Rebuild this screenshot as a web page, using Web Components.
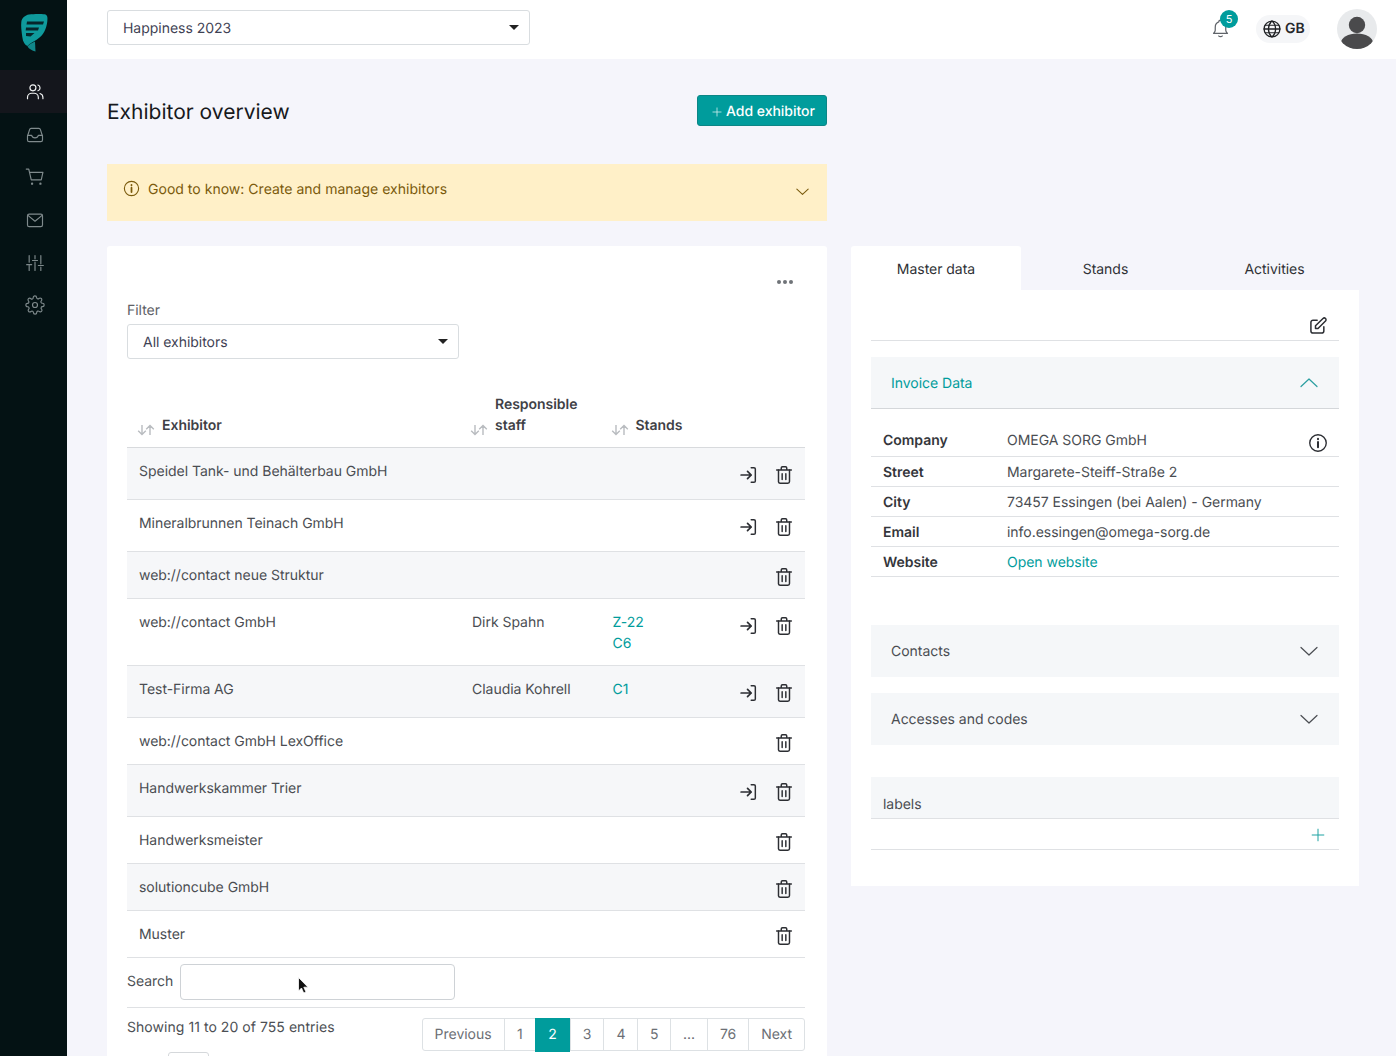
<!DOCTYPE html>
<html lang="en"><head><meta charset="utf-8"><title>Exhibitor overview</title>
<style>
html,body{margin:0;padding:0;height:1056px;overflow:hidden;background:#f5f5fb}
body{font:14px/21px Inter,"Liberation Sans",sans-serif;color:#3f4254;text-rendering:geometricPrecision;letter-spacing:-.03px}
</style></head><body>
<app-shell>
  <side-bar slot="side"></side-bar>
  <top-bar slot="top"></top-bar>
  <page-head>Exhibitor overview</page-head>
  <hint-box>Good to know: Create and manage exhibitors</hint-box>
  <div class="cols" style="display:flex;gap:24px;align-items:flex-start;margin-top:25px">
    <exhibitor-card>
      <ex-row h="52" login><span slot="name">Speidel Tank- und Behälterbau GmbH</span></ex-row>
      <ex-row h="52" login alt="0"><span slot="name">Mineralbrunnen Teinach GmbH</span></ex-row>
      <ex-row h="47"><span slot="name">web://contact neue Struktur</span></ex-row>
      <ex-row h="67" login alt="0"><span slot="name">web://contact GmbH</span><span slot="staff">Dirk Spahn</span><span slot="stands">Z-22<br>C6</span></ex-row>
      <ex-row h="52" login><span slot="name">Test-Firma AG</span><span slot="staff">Claudia Kohrell</span><span slot="stands">C1</span></ex-row>
      <ex-row h="47" alt="0"><span slot="name">web://contact GmbH LexOffice</span></ex-row>
      <ex-row h="52" login><span slot="name">Handwerkskammer Trier</span></ex-row>
      <ex-row h="47" alt="0"><span slot="name">Handwerksmeister</span></ex-row>
      <ex-row h="47"><span slot="name">solutioncube GmbH</span></ex-row>
      <ex-row h="47" alt="0"><span slot="name">Muster</span></ex-row>
    </exhibitor-card>
    <detail-panel></detail-panel>
  </div>
</app-shell>
<script>
const ICONS={
users:'<circle cx="9.5" cy="7" r="3.6"/><path d="M3 20v-1.5C3 15.5 5.5 13.5 8 13.5h3c2.5 0 5 2 5 5V20"/><path d="M15.5 3.6a3.6 3.6 0 0 1 0 6.9M18 13.8c2 .6 3.5 2.4 3.5 4.7V20"/>',
inbox:'<path d="M3 13.5l2.5-8A2 2 0 0 1 7.4 4h9.2a2 2 0 0 1 1.9 1.5l2.500 8V18a2 2 0 0 1-2 2H5a2 2 0 0 1-2-2z"/><path d="M3 12.500h5c.5 2 2 3 4 3s3.500-1 4-3h5"/>',
cart:'<path d="M1.500 2.500h3l3 13h12l2-9H5.500"/><circle cx="8.500" cy="20" r=".7"/><circle cx="18.500" cy="20" r=".7"/>',
mail:'<rect x="3" y="5" width="18" height="15" rx="2"/><path d="M3.500 6.500L12 13.500l8.500-7"/>',
sliders:'<path d="M5 3v8M5 15v6M12 3v4M12 11v10M19 3v10M19 17v4M2 14h6M9 9h6M16 15h6"/>',
gear:'<circle cx="12" cy="12" r="3"/><path d="M19.400 15a1.650 1.650 0 0 0 .33 1.820l.06.06a2 2 0 1 1-2.830 2.830l-.06-.06a1.650 1.650 0 0 0-2.800 1.170V21a2 2 0 1 1-4 0v-.09a1.650 1.650 0 0 0-2.800-1.170l-.06.06a2 2 0 1 1-2.830-2.830l.06-.06a1.650 1.650 0 0 0-1.170-2.800H3a2 2 0 1 1 0-4h.09a1.650 1.650 0 0 0 1.170-2.800l-.06-.06a2 2 0 1 1 2.830-2.830l.06.06a1.650 1.650 0 0 0 2.800-1.170V3a2 2 0 1 1 4 0v.09a1.650 1.650 0 0 0 2.800 1.170l.06-.06a2 2 0 1 1 2.830 2.830l-.06.06a1.650 1.650 0 0 0 1.170 2.800H21a2 2 0 1 1 0 4h-.09a1.650 1.650 0 0 0-1.510 1.110z"/>',
bell:'<path d="M10 4.500a2 2 0 0 1 4 0c2.600 1 4 3.200 4 6v3.500c0 1.500 1 2.500 2 3.500H4c1-1 2-2 2-3.500v-3.500c0-2.800 1.400-5 4-6z"/><path d="M10 20.500c.5 1 3.500 1 4 0"/>',
globe:'<circle cx="12" cy="12" r="9.500"/><path d="M2.500 12h19M12 2.500c3 2.600 4.300 5.800 4.300 9.500s-1.300 6.900-4.300 9.500c-3-2.600-4.300-5.800-4.300-9.500S9 5.100 12 2.500z"/><path d="M3.600 7.500h16.800M3.600 16.500h16.800" stroke-width="1.200"/>',
login:'<path d="M15.500 4h3a1.500 1.500 0 0 1 1.500 1.500v13a1.500 1.500 0 0 1-1.500 1.500h-3"/><path d="M4.500 12h11M11.500 8l4 4-4 4" stroke-width="1.900"/>',
trash:'<path d="M4 6.500h16M9 6.500V4.300A1.300 1.300 0 0 1 10.300 3h3.400A1.300 1.300 0 0 1 15 4.300v2.200"/><path d="M6 6.500v13A1.800 1.800 0 0 0 7.800 21h8.400a1.800 1.800 0 0 0 1.800-1.800V6.500"/><path d="M10 10.500v6.500M14 10.500v6.500"/>',
edit:'<path d="M11 5H6a2.500 2.500 0 0 0-2.500 2.500V18A2.500 2.500 0 0 0 6 20.500h10.500A2.500 2.500 0 0 0 19 18v-5"/><path d="M9 15v-3.200L18 3a1.900 1.900 0 0 1 3 3l-9 9z"/>',
info:'<circle cx="12" cy="12" r="9"/><path d="M12 11v5.500" stroke-width="2.200"/><path d="M12 7.300v.6" stroke-width="2.200"/>',
down:'<path d="M4 8.500l8 7.500 8-7.500"/>',
up:'<path d="M4 15.500l8-7.500 8 7.500"/>',
plus:'<path d="M12 5v14M5 12h14"/>'
};
class XIcon extends HTMLElement{
  connectedCallback(){
    const s=this.getAttribute('size')||24,w=this.getAttribute('w')||1.6,c=this.getAttribute('color')||'currentColor';
    this.attachShadow({mode:'open'}).innerHTML=`<style>:host{display:inline-flex;width:${s}px;height:${s}px;flex:none}svg{display:block}</style>
    <svg width="${s}" height="${s}" viewBox="0 0 24 24" fill="none" stroke="${c}" stroke-width="${w}" stroke-linecap="round" stroke-linejoin="round">${ICONS[this.getAttribute('name')]}</svg>`;
  }
}
customElements.define('x-icon',XIcon);

class AppShell extends HTMLElement{constructor(){super();this.attachShadow({mode:'open'}).innerHTML=`<style>
:host{display:grid;grid-template-columns:67px 1fr;grid-template-rows:59px 1fr;height:1056px;overflow:hidden}
.s{grid-row:1/3}.m{padding:36px 37px 0 40px;min-width:0}
</style><div class="s"><slot name="side"></slot></div><div class="t"><slot name="top"></slot></div><div class="m"><slot></slot></div>`}}
customElements.define('app-shell',AppShell);

class SideBar extends HTMLElement{constructor(){super();
const item=(n,a)=>`<div class="i ${a?'a':''}"><x-icon name="${n}" size="20" w="1.400" color="${a?'#f2f4f4':'#7f8a8c'}"></x-icon></div>`;
this.attachShadow({mode:'open'}).innerHTML=`<style>
:host{display:block;height:1056px;background:#041214}
.logo{height:70px;display:flex;justify-content:center;align-items:flex-start;padding-top:13px;box-sizing:border-box}
.i{height:42.600px;box-sizing:border-box;padding:2px 0 0 2px;display:flex;align-items:center;justify-content:center}
.a{background:#14161c}
</style><div class="logo"><svg width="28" height="39" viewBox="20 12 28 39">
<path d="M29 13.500C34 12.800 41 12.800 44.500 13.300C47.500 13.800 47.800 16.500 47.300 20.500C46.500 27.500 43.500 34.500 37 38.500C33 41 29.500 42.500 27.500 45C25 44 22.800 41 22.300 36C21.500 30 20.800 25 21.300 21C21.800 17 25 14.200 29 13.500Z" fill="#0f9a9c"/>
<path d="M27.500 45.500C29 43.500 31.500 42 35 40.500L35.500 50.500C32 49.500 29 48 27.500 45.500Z" fill="#11878a"/>
<path d="M27 20.500h17l-1 3H26.500zM26 26.500h13l-1 3H25.700zM26 32h8.500l-4 3.500-4.500-.5z" fill="#06262b"/>
</svg></div>
${item('users',1)}${item('inbox')}${item('cart')}${item('mail')}${item('sliders')}${item('gear')}`}}
customElements.define('side-bar',SideBar);

class XSelect extends HTMLElement{constructor(){super();this.attachShadow({mode:'open'}).innerHTML=`<style>
:host{display:block;height:35px;box-sizing:border-box;border:1px solid #d9dde0;border-radius:3px;background:#fff;padding:7px 15px 5px;color:#3f4254;position:relative}
.c{position:absolute;right:10px;top:14px;width:0;height:0;border:5px solid transparent;border-top-color:#222;border-bottom:0}
</style><slot></slot><span class="c"></span>`}}
customElements.define('x-select',XSelect);

class TopBar extends HTMLElement{constructor(){super();this.attachShadow({mode:'open'}).innerHTML=`<style>
:host{display:flex;align-items:center;height:59px;background:#fff;padding:0 19px 0 40px}
x-select{width:423px;margin-top:-5px}
.r{margin-left:auto;display:flex;align-items:center;margin-top:-2px}
.bell{position:relative;display:flex;margin-right:25px;margin-top:-1px;color:#5f6369}
.b{position:absolute;left:10px;top:-8px;width:18px;height:18px;border-radius:50%;background:#009c9c;color:#fff;font-size:11px;line-height:18px;text-align:center}
.g{display:flex;align-items:center;gap:3px;height:28px;width:54px;box-sizing:border-box;padding:0 6px;border-radius:14px;background:#f5f6f8;font-weight:600;font-size:14px;color:#26282c;margin-right:27px}
</style><x-select>Happiness 2023</x-select><div class="r">
<div class="bell"><x-icon name="bell" size="21" w="1.400"></x-icon><span class="b">5</span></div>
<div class="g"><x-icon name="globe" size="20" w="1.600" color="#1f2124"></x-icon>GB</div>
<svg width="40" height="40" viewBox="0 0 40 40"><defs><clipPath id="ac"><circle cx="20" cy="20" r="20"/></clipPath></defs><circle cx="20" cy="20" r="20" fill="#e8eaec"/><g clip-path="url(#ac)"><circle cx="20" cy="16" r="8.200" fill="#4a4a4c"/><ellipse cx="20" cy="34" rx="16" ry="9.500" fill="#4a4a4c"/></g></svg>
</div>`}}
customElements.define('top-bar',TopBar);

class PageHead extends HTMLElement{constructor(){super();this.attachShadow({mode:'open'}).innerHTML=`<style>
:host{display:flex;width:720px;height:69px;align-items:flex-start;justify-content:space-between}
h1{margin:1px 0 0;font-size:21px;line-height:33px;font-weight:400;color:#17191d;letter-spacing:0}
button{all:unset;box-sizing:border-box;display:flex;align-items:center;gap:2px;height:31px;width:130px;padding:2px 12px 0;background:#009c9c;border:1px solid #0c8686;border-radius:3px;color:#fff;font:500 14px/21px Inter,sans-serif;white-space:nowrap;letter-spacing:-.03px}
</style><h1><slot></slot></h1><button><x-icon name="plus" size="14" w="1.300" color="#d7f2f2" style="margin-top:1px"></x-icon>Add exhibitor</button>`}}
customElements.define('page-head',PageHead);

class HintBox extends HTMLElement{constructor(){super();this.attachShadow({mode:'open'}).innerHTML=`<style>
:host{display:flex;box-sizing:border-box;width:720px;height:57px;background:#fff0c8;color:#7a5a0c;padding:14px 16px 0;letter-spacing:.02px}
.t{margin:1px 0 0 7px;flex:1}
.d{margin:5px 0 0}
x-icon.i{margin:1px 0 0 -1px}
</style><x-icon class="i" name="info" size="19" w="1.400"></x-icon><div class="t"><slot></slot></div><x-icon class="d" name="down" size="17" w="1.500"></x-icon>`}}
customElements.define('hint-box',HintBox);

const SORT=`<svg width="18" height="12" viewBox="0 0 18 12" fill="none" stroke="#b9bcc0" stroke-width="1.400"><path d="M5 1v9.500M1.200 6.800L5 10.500l3.800-3.700M13 11V1.500M9.200 5.200L13 1.500l3.800 3.700"/></svg>`;
class ExhibitorCard extends HTMLElement{constructor(){super();
const pages=[['Previous',12],['1',12.5],['2',0],['3',12],['4',12],['5',11.5],['...',12],['76',12],['Next',12]];
this.attachShadow({mode:'open'}).innerHTML=`<style>
:host{display:block;box-sizing:border-box;flex:none;width:720px;height:860px;background:#fff;border-radius:3px;padding:0 22px 0 20px;position:relative}
.dots{display:flex;justify-content:flex-end;gap:2px;padding:34px 12px 0 0;height:54px;box-sizing:border-box}
.dots i{width:4px;height:4px;border-radius:50%;background:#6f7378}
label{display:block;color:#5e6166;line-height:21px}
x-select{width:332px;margin-top:3px}
.head{display:grid;grid-template-columns:333px 140.500px 1fr;margin-top:34px;height:54px;border-bottom:1px solid #d8dadd;box-sizing:content-box}
.h{display:flex;align-items:flex-end;gap:7px;padding:0 0 11px 10px;font-weight:600;color:#3f4146;line-height:21px}
.h svg{margin-bottom:0;flex:none}
.search{display:flex;align-items:center;gap:7px;height:49px;border-bottom:1px solid #dfe1e4;color:#4c4f54}
.search span{margin-top:-3px}
.search div{width:275px;height:36px;box-sizing:border-box;border:1px solid #ced2d6;border-radius:4px;margin-top:-1px;position:relative}
.foot{display:flex;justify-content:space-between;align-items:flex-start;padding-top:10px;color:#4c4f54}
.foot>span{display:block;margin-top:-1px;letter-spacing:.05px}
.pg{display:flex;height:33px;border:1px solid #dde1e4;border-radius:3px;box-sizing:border-box;color:#6c6f75}
.pg span{line-height:32px;border-left:1px solid #dde1e4}
.pg span:first-child{border-left:0}
.pg .on{background:#009c9c;color:#fff;border-left:0;margin:-1px 0;height:33px;padding:1px 13px 0}
.len{position:absolute;left:61px;top:806px;width:41px;height:34px;box-sizing:border-box;border:1px solid #d5d8db;border-radius:3px}
</style>
<div class="dots"><i></i><i></i><i></i></div>
<label>Filter</label><x-select>All exhibitors</x-select>
<div class="head"><div class="h">${SORT}<span>Exhibitor</span></div><div class="h">${SORT}<span>Responsible<br>staff</span></div><div class="h">${SORT}<span>Stands</span></div></div>
<slot></slot>
<div class="search"><span>Search</span><div></div></div>
<div class="foot"><span>Showing 11 to 20 of 755 entries</span><div class="pg">${pages.map(([p,n])=>n?`<span style="padding:0 ${n}px">${p}</span>`:`<span class="on">${p}</span>`).join('')}</div></div>
<div class="len"></div>`;
}}
customElements.define('exhibitor-card',ExhibitorCard);

class ExRow extends HTMLElement{constructor(){super();this.attachShadow({mode:'open'})}
connectedCallback(){const h=this.getAttribute('h'),login=this.hasAttribute('login'),alt=this.getAttribute('alt')!=='0';
this.shadowRoot.innerHTML=`<style>
:host{display:grid;grid-template-columns:333px 140.500px 1fr auto;height:${h}px;box-sizing:border-box;border-bottom:1px solid #dfe1e4;background:${alt?'#f6f7f9':'#fff'};color:#4a4d52}
.c{padding:13px 12px 0}
.st{color:#009c9c}
.a{display:flex;gap:14px;padding:${login?14:12}px 10px 0 0}
.sp{width:22px;height:22px}
</style><div class="c"><slot name="name"></slot></div><div class="c"><slot name="staff"></slot></div><div class="c st"><slot name="stands"></slot></div>
<div class="a">${login?'<x-icon name="login" size="22" w="1.600" color="#2c2e33" style="margin:2px 0 0"></x-icon>':'<span class="sp"></span>'}<x-icon name="trash" size="22" w="1.600" color="#2c2e33" style="margin:2px 0 0"></x-icon></div>`}}
customElements.define('ex-row',ExRow);

class DetailPanel extends HTMLElement{constructor(){super();
const acc=(t,mt)=>`<div class="acc" style="margin-top:${mt}px"><span>${t}</span><x-icon name="down" size="24" w="1.200" color="#4a4d52"></x-icon></div>`;
const row=(k,v,c='',x='')=>`<div class="r ${c}"><b>${k}</b><span>${v}</span>${x}</div>`;
this.attachShadow({mode:'open'}).innerHTML=`<style>
:host{display:block;flex:none;width:508px;color:#3f4146}
.tabs{display:grid;grid-template-columns:170px 169px 169px;height:44px;text-align:center;line-height:47px;color:#2f3135}
.tabs .on{background:#fff;border-radius:3px 3px 0 0}
.body{background:#fff;padding:0 20px;height:596px;box-sizing:border-box}
.ed{height:51px;border-bottom:1px solid #dfe1e4;box-sizing:border-box;display:flex;justify-content:flex-end;padding:26px 11px 0 0}
.inv{margin-top:16px;height:52px;background:#f5f7f9;border-bottom:1px solid #d4d7da;box-sizing:border-box;display:flex;align-items:center;justify-content:space-between;padding:0 18px 0 20px;color:#009c9c}
.inv span{margin-top:2px}
.acc{height:52px;background:#f5f7f9;display:flex;align-items:center;justify-content:space-between;padding:0 18px 0 20px;color:#4a4d52}
.r{display:grid;grid-template-columns:124px 1fr;height:30px;box-sizing:border-box;border-bottom:1px solid #dfe1e4;padding:5px 12px 0;position:relative;color:#4a4d52}
.r b{font-weight:600;color:#34363b}
.r.first{height:48px;padding-top:21px}
.r x-icon{position:absolute;right:10px;top:23px}
.l{color:#009c9c}
.lab{margin-top:32px;height:42px;background:#f5f7f9;border-bottom:1px solid #dfe1e4;box-sizing:border-box;padding:17px 12px 0;color:#4a4d52}
.add{height:31px;border-bottom:1px solid #dfe1e4;box-sizing:border-box;display:flex;justify-content:flex-end;padding:6px 11px 0 0}
</style>
<div class="tabs"><div class="on">Master data</div><div>Stands</div><div>Activities</div></div>
<div class="body">
<div class="ed"><x-icon name="edit" size="20" w="1.800" color="#2c2e33"></x-icon></div>
<div class="inv"><span>Invoice Data</span><x-icon name="up" size="24" w="1.200" color="#2a9ea0"></x-icon></div>
${row('Company','OMEGA SORG GmbH','first','<x-icon name="info" size="22" w="1.500" color="#2c2e33"></x-icon>')}
${row('Street','Margarete-Steiff-Straße 2')}
${row('City','73457 Essingen (bei Aalen) - Germany')}
${row('Email','info.essingen@omega-sorg.de')}
${row('Website','<span class="l">Open website</span>')}
${acc('Contacts',48)}${acc('Accesses and codes',16)}
<div class="lab">labels</div>
<div class="add"><x-icon name="plus" size="20" w="1.200" color="#1fa3a3"></x-icon></div>
</div>`}}
customElements.define('detail-panel',DetailPanel);

class MouseCursor extends HTMLElement{constructor(){super();this.attachShadow({mode:'open'}).innerHTML=`<style>:host{position:fixed;left:298px;top:977px;display:block;width:12px;height:20px;z-index:5}</style>
<svg width="12" height="20" viewBox="0 0 12 20"><path d="M.5.500V14l3-3 2.200 5 2.300-1-2.200-4.800H10z" fill="#111" stroke="#fff" stroke-width=".8"/></svg>`}}
customElements.define('mouse-cursor',MouseCursor);
document.body.appendChild(document.createElement('mouse-cursor'));
</script>
</body></html>
